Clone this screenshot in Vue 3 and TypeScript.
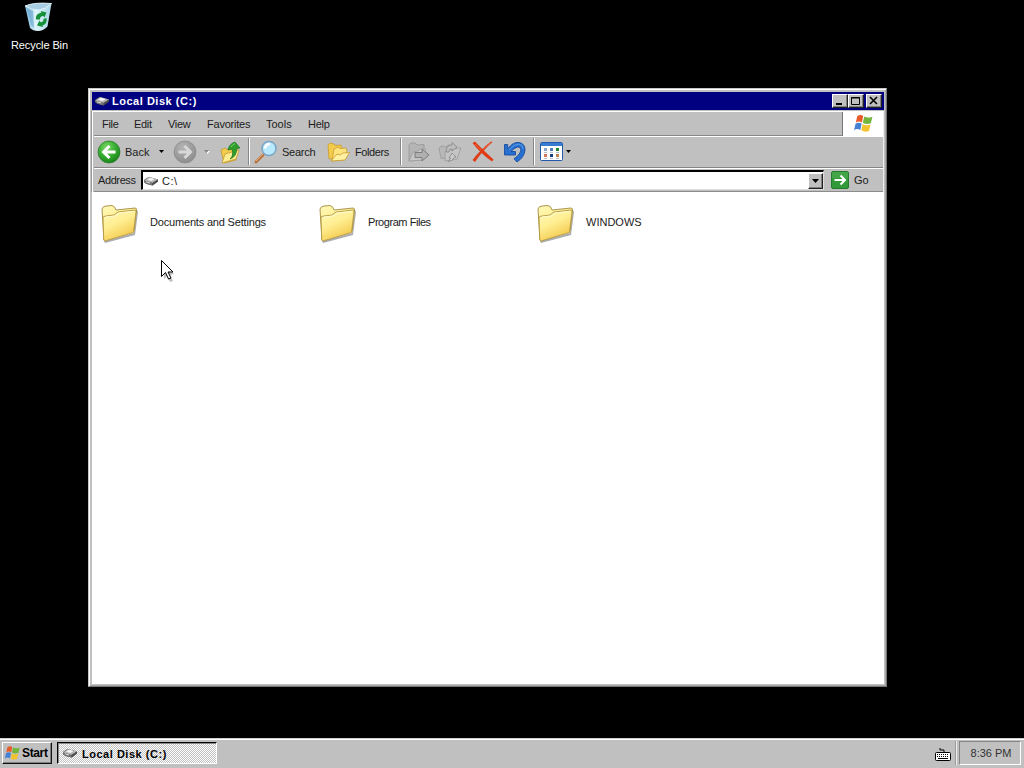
<script setup lang="ts">
interface Folder { name: string; cls: string }
const folders: Folder[] = [
  { name: 'Documents and Settings', cls: 'docs' },
  { name: 'Program Files', cls: 'prog' },
  { name: 'WINDOWS', cls: 'win' },
]
const menus: string[] = ['File', 'Edit', 'View', 'Favorites', 'Tools', 'Help']
</script>

<template>
  <svg class="defs" width="0" height="0">
    <defs>
      <linearGradient id="fold" x1="0" y1="0" x2="0.5" y2="1"><stop offset="0" stop-color="#fff9b8" /><stop offset=".5" stop-color="#ffee92" /><stop offset="1" stop-color="#f3c94b" /></linearGradient>
      <radialGradient id="green" cx=".4" cy=".3" r=".75"><stop offset="0" stop-color="#7fd86a" /><stop offset=".55" stop-color="#35ab30" /><stop offset="1" stop-color="#168016" /></radialGradient>
      <radialGradient id="grey" cx=".4" cy=".3" r=".75"><stop offset="0" stop-color="#b4b4b4" /><stop offset="1" stop-color="#8b8b8b" /></radialGradient>
      <linearGradient id="bin" x1="0" x2="1"><stop offset="0" stop-color="#6fb0d8" /><stop offset=".4" stop-color="#e0f5fc" /><stop offset="1" stop-color="#a8d4e8" /></linearGradient>
      <symbol id="disk" viewBox="0 0 16 10">
        <path d="M1 4.500Q1 3 6 1l9 2.500v2L9.500 9.500Q2 8 1 6z" fill="#4c4c4c" />
        <path d="M1 4.500 6 1l9 2.500L9.500 7z" fill="#b5b5b5" />
        <path d="M4 3.800 7 1.800l4.500 1.300-3 2z" fill="#f4f4f4" />
        <path d="M1 4.500 9.500 7v2.500L2 7z" fill="#777" />
        <path d="M3 5.800 7 7" stroke="#ddd" />
        <path d="M9.500 7 15 3.500v2l-5.500 4z" fill="#4d4d4d" />
      </symbol>
      <symbol id="flag" viewBox="0 0 20 18">
        <path d="M4 2.200Q7 0 9.700 1.800L8.500 8Q5.500 6.200 2.700 8.300z" fill="#e85a28" />
        <path d="M10.700 2.300Q14 4.300 18.500 2.500L17 8.800Q13 10.400 9.400 8.400z" fill="#73b63d" />
        <path d="M2.400 9.300Q5.400 7.200 8.200 9L7 15.200Q4 13.300 1 15.400z" fill="#4381d6" />
        <path d="M9.200 9.500Q12.800 11.500 16.700 9.900L15.200 16.200Q11.700 17.600 8 15.700z" fill="#f3c32d" />
      </symbol>
    </defs>
  </svg>
  <main class="desktop">
    <div class="recycle">
      <svg width="30" height="30" viewBox="0 0 30 30">
        <path d="M1 4Q7 8 13 7.500 21 7 27.500 1.500L23.500 24.500Q19 29 14 29 9 29 6 26z" fill="url(#bin)" />
        <path d="M1 4Q10 0 27.500 1.500 22 7 15 8 7 8 1 4z" fill="#a8cde2" stroke="#e7f8ff" stroke-width=".9" />
        <path d="M3 6.500 7 23 10 26 9 9z" fill="#5c9dcb" opacity=".55" />
        <path d="M12 17.500q-1-5 4-6.500l1.500-.5L17 9l5.500 1.500-2 5-1.200-1.500q-3.500 0-3.300 3.500zM22.500 16q1 6-4 7.500l.5 1.500-6-1.500 2.500-5 1 1.800q3 0 3-3.300z" fill="#16913a" />
      </svg>
      <span>Recycle Bin</span>
    </div>

    <section class="window">
      <header class="title">
        <svg width="16" height="10"><use href="#disk" /></svg>
        <b>Local Disk (C:)</b>
        <div class="controls">
          <i class="btn"><svg width="12" height="10"><path d="M2 8h6" stroke="#000" stroke-width="2" /></svg></i>
          <i class="btn"><svg width="12" height="10"><path d="M1.500 1.500h8v7h-8zM1 2h9" fill="none" stroke="#000" /></svg></i>
          <i class="btn close"><svg width="12" height="10"><path d="m2 1 7 7M9 1 2 8" stroke="#000" stroke-width="1.600" /></svg></i>
        </div>
      </header>

      <div class="bars">
        <div class="band menu">
          <nav><span v-for="m in menus" :key="m" :class="'m-' + m.toLowerCase()">{{ m }}</span></nav>
          <div class="logo"><svg width="21" height="19" viewBox="0 0 20 18"><use href="#flag" /></svg></div>
        </div>

        <div class="band tools">
          <svg width="24" height="24" viewBox="0 0 24 24"><circle cx="12" cy="12" r="11" fill="url(#green)" stroke="#28782a" stroke-width=".7" /><path d="M18.500 12H7M12.500 6 6.500 12l6 6" fill="none" stroke="#fff" stroke-width="2.900" /></svg>
          <span class="t-back">Back</span>
          <svg width="5" height="3"><path d="M0 0h5L2.500 3z" /></svg>
          <svg width="24" height="24" viewBox="0 0 24 24"><circle cx="12" cy="12" r="11" fill="url(#grey)" stroke="#8a8a8a" stroke-width=".7" /><path d="M5.500 12H17M11.500 6l6 6-6 6" fill="none" stroke="#d8d8d8" stroke-width="2.900" /></svg>
          <svg width="6" height="4"><path d="M1 1h5L3.500 4z" fill="#fff" /><path d="M0 0h5L2.500 3z" fill="#858585" /></svg>
          <svg width="24" height="24" viewBox="0 0 24 24">
            <path d="M2 10 6 8l3 2 9-2-1 12-12 3z" fill="#f2cd4d" stroke="#c49930" stroke-width=".8" />
            <path d="m3 23 3-9 14-4-3 9z" fill="#ffec91" stroke="#c49930" stroke-width=".8" />
            <path d="M11 19q4-3 2-10l-4 1q1-6 7-8l5 6-3.500.5q.5 8-6.500 10.500z" fill="#2f9e2d" stroke="#14721b" stroke-width=".7" />
            <path d="M12 7q2-3 4-3.500" fill="none" stroke="#79d46a" />
          </svg>
          <i class="sep" />
          <svg width="24" height="24" viewBox="0 0 24 24"><path d="m2 22 7-7" stroke="#b8753f" stroke-width="3" stroke-linecap="round" /><path d="m2 21 7-7" stroke="#dfab7a" /><circle cx="15" cy="8.500" r="7" fill="#b9e9fc" stroke="#7ba5c8" stroke-width="1.500" /><path d="M11 8.500q.5-4.500 5-4.500" fill="none" stroke="#fff" stroke-width="2.500" /></svg>
          <span class="t-search">Search</span>
          <svg width="24" height="24" viewBox="0 0 24 24"><path d="M1 5 3 3l4 1 1 1.500L14 5l1 3-3 10-10 1z" fill="#f3cb4a" stroke="#c69a2f" stroke-width=".8" /><path d="m7 9 4-2 2 1.500 6-.5 1 3-3 9-12 1z" fill="#ffe47e" stroke="#c69a2f" stroke-width=".8" /><path d="m4 21 6-7 3 1 3-2 6.500-.5-4.500 7.500z" fill="#fff1a2" stroke="#c69a2f" stroke-width=".8" /></svg>
          <span class="t-folders">Folders</span>
          <i class="sep" />
          <svg width="24" height="24" viewBox="0 0 24 24"><path d="M2 5 4 3h4l2 2 7-.5V8L14 20 2 21z" fill="#b5b5b5" stroke="#999" stroke-width=".9" /><path d="m2 21 4-9 5-1 2-2 6 0-3 11z" fill="#c6c6c6" stroke="#9c9c9c" stroke-width=".8" /><path d="M8 12.500h7V9l7 6-7 6v-3.500H8z" fill="#b0b0b0" stroke="#777" stroke-width=".9" /></svg>
          <svg width="24" height="24" viewBox="0 0 24 24"><path d="m1 8 3-2 4 1 2-2 6 .5 1 3-4 9-10 1z" fill="#b8b8b8" stroke="#999" stroke-width=".8" /><path d="m7 12 3-3 4 1 2-1.500 7-.5-4 11-12 2z" fill="#c4c4c4" stroke="#9a9a9a" stroke-width=".8" /><path d="M8 12q0-7 6-7V2.500l5 4.500-5 4V9q-3 0-3 3z" fill="#bcbcbc" stroke="#858585" stroke-width=".8" /><path d="m11 18 3-5 4 4-2 .3q-1 4-6 4.200 2-1.500 2.500-3.500z" fill="#ccc" stroke="#888" stroke-width=".8" /></svg>
          <svg width="24" height="24" viewBox="0 0 24 24"><path d="m1.500 3 2.500-1.500Q11 9 22.500 19.500L21 21.500Q10 14 1.500 3z" fill="#df3c16" /><path d="M21.500 2 20 1.500Q9 10 1.500 20l2.500 2Q12 10 21.500 2z" fill="#df3c16" /><path d="m4 4 6 6M19 3l-7 6" stroke="#f2623a" /></svg>
          <svg width="24" height="24" viewBox="0 0 24 24"><path d="M1.500 4.500h3.200V9Q10 1.500 16 2.500 22 3.500 22 10 21.500 17 14 22l-3-3.200Q18 14 17.800 9.500 17.500 6.500 14.500 7 11 8 8 11.500h4.500V15H1.500z" fill="#2870cf" stroke="#174c9e" stroke-width=".9" /><path d="M6 10Q11 4 16 4q4 1 4 5" fill="none" stroke="#5ba0ea" /></svg>
          <i class="sep" />
          <svg width="24" height="20" viewBox="0 0 24 20">
            <rect x=".5" y=".5" width="22" height="18" rx="1" fill="#fff" stroke="#2259aa" /><path d="M1 1h21v3H1z" fill="#397bd0" />
            <path d="M4 6h3v3H4z" fill="#8ba6c8" /><path d="M10 6h3v3h-3z" fill="#517dbb" /><path d="M16 6h3v3h-3z" fill="#208327" /><path d="M4 12h3v3H4z" fill="#d5765c" /><path d="M10 12h3v3h-3z" fill="#163f82" /><path d="M16 12h3v3h-3z" fill="#bb8751" />
            <path d="M4 10.500h3M10 10.500h3M16 10.500h3M4 16.500h3M10 16.500h3M16 16.500h3" stroke="#b8c1cb" />
          </svg>
          <svg width="5" height="3"><path d="M0 0h5L2.500 3z" /></svg>
        </div>

        <div class="band address">
          <span class="t-address">Address</span>
          <div class="combo">
            <svg width="16" height="10"><use href="#disk" /></svg><span>C:\</span>
            <i class="drop"><svg width="7" height="4"><path d="M0 0h7L3.500 4z" /></svg></i>
          </div>
          <svg class="go" width="18" height="18"><rect x=".5" y=".5" width="17" height="17" rx="1.500" fill="#339a3a" stroke="#237c2b" /><path d="M1 1h16v6H1z" fill="#4cae50" opacity=".6" /><path d="M3.500 9H14M9.500 4.500 14 9l-4.500 4.500" fill="none" stroke="#fff" stroke-width="2" /></svg>
          <span>Go</span>
        </div>
      </div>

      <div class="content">
        <div v-for="f in folders" :key="f.name" class="folder">
          <svg width="40" height="40" viewBox="0 0 40 40">
            <path d="m4 37 30-8 3-23 1 2-3 23L5 39z" fill="#777" opacity=".6" />
            <path d="M2 5Q3 2 6 2l6-.5Q15 2 16 6l19-2q2 0 1.500 3L34 27 4 36z" fill="url(#fold)" stroke="#a28a42" stroke-width=".9" />
            <path d="M3 14Q3 12 6 12l8-1 4-3 17-2q1.500 0 1 2L33.500 28.500 5 37q-1.300 0-1.300-2z" fill="url(#fold)" stroke="#b19542" stroke-width=".9" />
            <path d="M4.500 14.500 6 13l9-1 4-3 15-1.500" fill="none" stroke="#fffbd0" />
          </svg>
          <span :class="f.cls">{{ f.name }}</span>
        </div>
      </div>
    </section>

    <svg class="pointer" width="18" height="24" viewBox="0 0 18 24"><path d="m3 3 11 12-4 1 3 6-3 1-3-6-3 3z" fill="#999" opacity=".6" /><path d="M1.500 1.500v16l4-4 3 6.500 2.500-1-3-6h5z" fill="#fff" stroke="#000" /></svg>

    <footer class="taskbar">
      <div class="start"><svg width="17" height="16" viewBox="0 0 20 18"><use href="#flag" /></svg><b>Start</b></div>
      <div class="task"><svg width="16" height="10"><use href="#disk" /></svg><b>Local Disk (C:)</b></div>
      <svg class="keys" width="16" height="14" viewBox="0 0 16 14"><path d="M9 5V3H5V1" fill="none" stroke="#000" /><rect x=".5" y="5.500" width="15" height="8" rx="1" fill="#fff" stroke="#000" /><path d="M2 7.500h12M2 9.500h12" stroke="#000" stroke-dasharray="1 1" /><path d="M3 11.500h10" stroke="#000" /></svg>
      <i class="edge" />
      <div class="tray">8:36 PM</div>
    </footer>
  </main>
</template>

<style>
body { margin: 0; overflow: hidden; }
</style>

<style scoped>
* { box-sizing: border-box; }
.defs { position: absolute; }
svg { display: block; flex: none; }
i { font-style: normal; }
span, b { white-space: nowrap; }
.desktop { position: relative; width: 1024px; height: 768px; background: #000; overflow: hidden; font: 11px/14px "Liberation Sans", Arial, sans-serif; color: #1c1c1c; display: flex; flex-direction: column; }
.recycle { height: 88px; width: 78px; padding-top: 2px; display: flex; flex-direction: column; align-items: center; color: #fff; flex: none; }
.recycle span { margin-top: 6px; margin-left: 1px; letter-spacing: -.1px; }
.recycle svg { margin-left: -1px; }
.window { margin-left: 88px; width: 799px; height: 599px; flex: none; background: #c0c0c0; border: 1px solid; border-color: #c8c8c8 #777 #777 #c8c8c8; box-shadow: inset 1px 1px #fff, inset -1px -1px #a8a8a8; padding: 3px 2px 2px 3px; display: flex; flex-direction: column; }
.title { background: #000080; color: #fff; height: 18px; width: 792px; display: flex; align-items: center; padding: 0 2px; }
.title b { margin-left: 2px; letter-spacing: .52px; }
.controls { margin-left: auto; display: flex; }
.btn { width: 16px; height: 14px; background: #c0c0c0; border: 1px solid; border-color: #fff #222 #222 #fff; box-shadow: inset -1px -1px #808080; padding: 1px; }
.close { margin-left: 2px; }
.bars { margin-top: 1px; height: 81px; width: 792px; border: 1px solid #fff; border-right-color: #eee; border-bottom: 0; box-shadow: -1px 0 #999; padding-left: 1px; }
.band { display: flex; align-items: center; }
.menu { height: 24px; border-bottom: 1px solid #888; }
nav { display: flex; align-items: center; height: 100%; padding: 1px 0 0 8px; }
nav span { margin-right: 16px; }
nav .m-file { width: 16px; letter-spacing: -.3px; }
nav .m-edit { width: 20px; letter-spacing: -.3px; }
nav .m-edit { margin-right: 14px; }
nav .m-view { width: 23px; letter-spacing: -.3px; }
nav .m-favorites { width: 43px; letter-spacing: -.22px; }
nav .m-tools { width: 26px; }
nav .m-help { letter-spacing: -.25px; }
.logo { margin-left: auto; width: 41px; height: 24px; border-left: 1px solid #777; background: #fff; display: grid; place-items: center; }
.tools { height: 32px; border-top: 1px solid #fff; border-bottom: 1px solid #858585; display: grid; padding: 0 0 1px 3px; grid-template-columns: 28px 34px 14px 31px 15px 29px 6px 28px 45px 28px 45px 7px 31px 33px 32px 30px 7px 26px 6px; }
.t-search { letter-spacing: -.25px; }
.t-folders { letter-spacing: -.4px; }
.sep { width: 2px; height: 27px; border-left: 1px solid #868686; border-right: 1px solid #fff; }
.address { height: 24px; border-top: 1px solid #fff; border-bottom: 1px solid #8b8b8b; padding-left: 3px; }
.t-address { width: 44px; padding-left: 1px; letter-spacing: -.4px; }
.combo { width: 683px; height: 20px; background: #fff; border: 2px solid; border-color: #000 #ddd #ddd #000; border-bottom-width: 1px; border-right-width: 1px; display: flex; align-items: center; }
.combo span { margin-left: 3px; letter-spacing: .55px; }
.drop { margin-left: auto; width: 15px; height: 16px; background: #c0c0c0; border: 1px solid; border-color: #fff #222 #222 #fff; box-shadow: inset -1px -1px #808080; display: grid; place-items: center; }
.go { margin: 0 5px 0 7px; }
.content { flex: 1; background: #fff; width: 792px; display: flex; align-items: flex-start; padding: 12px 0 0 8px; }
.folder { width: 218px; display: flex; align-items: center; height: 40px; }
.folder span { margin: -5px 0 0 10px; }
.docs { letter-spacing: -.18px; }
.prog { letter-spacing: -.45px; }
.pointer { position: absolute; left: 160px; top: 259px; }
.taskbar { margin-top: auto; height: 30px; background: #c0c0c0; box-shadow: inset 0 1px #d0d0d0, inset 0 2px #fff; display: flex; align-items: center; flex: none; padding: 0 3px 0 2px; }
.start { width: 50px; height: 22px; border: 1px solid; border-color: #fff #111 #111 #fff; box-shadow: inset -1px -1px #808080; display: flex; align-items: center; padding-left: 1px; color: #000; }
.start b { margin-left: 1px; font-size: 12px; letter-spacing: -.35px; }
.task { margin-left: 5px; width: 160px; height: 22px; border: 1px solid; border-color: #000 #fff #fff #000; box-shadow: inset 1px 1px #888; background: repeating-conic-gradient(#fff 0 25%, #c2c2c2 0 50%) 0 0 / 2px 2px; display: flex; align-items: center; padding-left: 4px; color: #000; }
.task b { margin-left: 4px; letter-spacing: .52px; padding-top: 1px; }
.keys { margin: 1px 4px 0 auto; }
.edge { width: 2px; height: 24px; border-left: 1px solid #999; border-right: 1px solid #eee; margin-right: 2px; }
.tray { width: 62px; height: 24px; border: 1px solid; border-color: #858585 #fff #fff #858585; display: grid; place-items: center; padding-left: 2px; color: #333; }
</style>
